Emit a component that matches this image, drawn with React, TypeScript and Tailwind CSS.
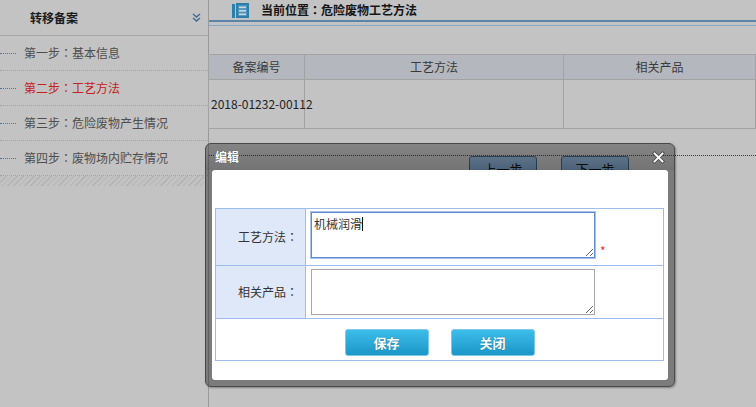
function C({ t }: { t: string }) {
  const parts = t.split("：");
  return (
    <>
      {parts.map((p, i) => (
        <span key={i}>
          {p}
          {i < parts.length - 1 && <span className="font-['Noto_Sans_CJK_TC',sans-serif]">：</span>}
        </span>
      ))}
    </>
  );
}

export default function App() {
  const items = [
    { t: "第一步：基本信息", active: false },
    { t: "第二步：工艺方法", active: true },
    { t: "第三步：危险废物产生情况", active: false },
    { t: "第四步：废物场内贮存情况", active: false },
  ];
  return (
    <div className="relative w-[756px] h-[407px] overflow-hidden bg-[#c3c3c3] flex font-['Noto_Sans_CJK_SC',sans-serif] text-[12px] leading-none">
      <aside className="w-[209px] h-full shrink-0 border-r border-[#9a9a9a] flex flex-col">
        <div className="h-[36px] flex items-center justify-between pl-[30px] pr-[7px] border-b border-[#a8a8a8]">
          <span className="font-bold text-[12px] text-[#1c1c1c]">转移备案</span>
          <svg width="9" height="9" viewBox="0 0 9 9">
            <path d="M1 1 L4.5 4 L8 1 M1 5 L4.5 8 L8 5" stroke="#3e6a94" strokeWidth="1.4" fill="none" />
          </svg>
        </div>
        {items.map((it) => (
          <div key={it.t} className="h-[35px] flex items-center border-b border-dotted border-[#a3a3a3]">
            <span className="w-[16px] border-t border-dotted border-[#4f7890]" />
            <span className={"ml-[8px] " + (it.active ? "text-[#c62020]" : "text-[#4e4e4e]")}>
              <C t={it.t} />
            </span>
          </div>
        ))}
        <div className="h-[10px] w-[204px] bg-[repeating-linear-gradient(135deg,#b3b3b3_0_1px,#c2c2c2_1px_4px)]" />
      </aside>

      <main className="flex-1 flex flex-col">
        <div className="h-[20px] flex items-center pl-[23px] gap-[12px]">
          <svg width="17" height="15" viewBox="0 0 17 15">
            <rect x="0" y="1" width="3" height="14" fill="#2c7eab" />
            <rect x="4" y="0" width="13" height="15" fill="#2c7eab" />
            <rect x="6" y="2" width="9" height="11" fill="#4d93bb" />
            <rect x="7" y="3.5" width="7" height="1.6" fill="#c9d7de" />
            <rect x="7" y="7" width="7" height="1.6" fill="#c9d7de" />
            <rect x="7" y="10.5" width="7" height="1.6" fill="#c9d7de" />
          </svg>
          <span className="font-bold text-[#161616]">
            <C t="当前位置：危险废物工艺方法" />
          </span>
        </div>
        <div className="h-[2px] bg-[#5a84aa]" />
        <div className="h-[1px] mt-[3px] bg-[#84a9c9]" />
        <table className="mt-[28px] -ml-px w-[548px] table-fixed border-collapse">
          <colgroup>
            <col className="w-[96px]" />
            <col className="w-[259px]" />
            <col />
          </colgroup>
          <thead>
            <tr className="h-[25px] bg-[#b4b8be]">
              <th className="border border-[#a3a3a3] font-normal text-[#3a3a3a]">备案编号</th>
              <th className="border border-[#a3a3a3] font-normal text-[#3a3a3a]">工艺方法</th>
              <th className="border border-[#a3a3a3] font-normal text-[#3a3a3a]">相关产品</th>
            </tr>
          </thead>
          <tbody>
            <tr className="h-[49px]">
              <td className="border border-[#a3a3a3] pl-[2px] text-left whitespace-nowrap overflow-visible text-[#222]">2018-01232-00112</td>
              <td className="border border-[#a3a3a3]"></td>
              <td className="border border-[#a3a3a3]"></td>
            </tr>
          </tbody>
        </table>
        <div className="mt-[26px] border-t border-dotted border-[#3a3a3a] flex gap-[24px] pl-[260px]">
          <div className="w-[68px] h-[24px] rounded-[3px] border border-[#3d5f80] bg-[linear-gradient(#8fb4d8,#6f96bd)] flex items-center justify-center text-[13px] text-[#111]">上一步</div>
          <div className="w-[68px] h-[24px] rounded-[3px] border border-[#3d5f80] bg-[linear-gradient(#8fb4d8,#6f96bd)] flex items-center justify-center text-[13px] text-[#111]">下一步</div>
        </div>
      </main>

      <div className="absolute left-[205px] top-[143px] w-[470px] h-[244px] rounded-[6px] border border-[#4a4a4a] bg-[rgba(0,0,0,0.37)] shadow-[1px_1px_2px_rgba(0,0,0,0.35)] flex flex-col">
        <div className="h-[26px] flex items-center justify-between pl-[9px] pr-[9px] rounded-t-[5px] bg-[linear-gradient(rgba(255,255,255,0.07),rgba(0,0,0,0.06))]">
          <span className="text-white font-bold [text-shadow:0_0_1px_#333]">编辑</span>
          <svg width="13" height="13" viewBox="0 0 13 13">
            <path d="M2.5 2.5L10.5 10.5M10.5 2.5L2.5 10.5" stroke="#505050" strokeWidth="3.6" strokeLinecap="square" />
            <path d="M2.5 2.5L10.5 10.5M10.5 2.5L2.5 10.5" stroke="#ffffff" strokeWidth="1.8" strokeLinecap="square" />
          </svg>
        </div>
        <div className="mx-[6px] h-[210px] bg-white rounded-[3px] pt-[38px] pl-[3px] pr-[4px]">
          <table className="w-[449px] table-fixed border-collapse">
            <colgroup>
              <col className="w-[90px]" />
              <col />
            </colgroup>
            <tbody>
              <tr className="h-[57px]">
                <td className="border border-[#9cbdee] bg-[#dfe8f8] text-right pr-[7px] text-[#333]">
                  <C t="工艺方法：" />
                </td>
                <td className="border border-[#9cbdee] align-top pl-[5px] pt-[3px]">
                  <div className="flex items-end gap-[5px]">
                    <div className="relative">
                      <textarea
                        readOnly
                        value="机械润滑"
                        className="block w-[284px] h-[46px] border border-[#5e8ad0] shadow-[0_0_0_1px_#a8c2ec] px-[2px] py-[3px] text-[12px] leading-[16px] text-[#333] font-['Noto_Sans_CJK_SC',sans-serif] outline-none"
                      />
                      <span className="absolute left-[51px] top-[5px] w-px h-[14px] bg-[#111]" />
                    </div>
                    <span className="text-[#f03030] text-[12px] mb-[1px]">*</span>
                  </div>
                </td>
              </tr>
              <tr className="h-[53px]">
                <td className="border border-[#9cbdee] bg-[#dfe8f8] text-right pr-[7px] text-[#333]">
                  <C t="相关产品：" />
                </td>
                <td className="border border-[#9cbdee] align-top pl-[5px] pt-[3px]">
                  <textarea
                    readOnly
                    className="block w-[284px] h-[46px] border border-[#a9a9a9] px-[2px] py-[3px] text-[12px] font-['Noto_Sans_CJK_SC',sans-serif] outline-none"
                  />
                </td>
              </tr>
              <tr className="h-[42px]">
                <td colSpan={2} className="border border-[#9cbdee] align-top pt-[10px]">
                  <div className="flex justify-center gap-[22px]">
                    <button className="w-[84px] h-[27px] rounded-[3px] border border-[#7cc8ea] bg-[linear-gradient(#3dbdea,#1b96c6)] text-white font-bold text-[13px] [text-shadow:0_0_1px_#1a6a90]">保存</button>
                    <button className="w-[84px] h-[27px] rounded-[3px] border border-[#7cc8ea] bg-[linear-gradient(#3dbdea,#1b96c6)] text-white font-bold text-[13px] [text-shadow:0_0_1px_#1a6a90]">关闭</button>
                  </div>
                </td>
              </tr>
            </tbody>
          </table>
        </div>
      </div>
    </div>
  );
}
